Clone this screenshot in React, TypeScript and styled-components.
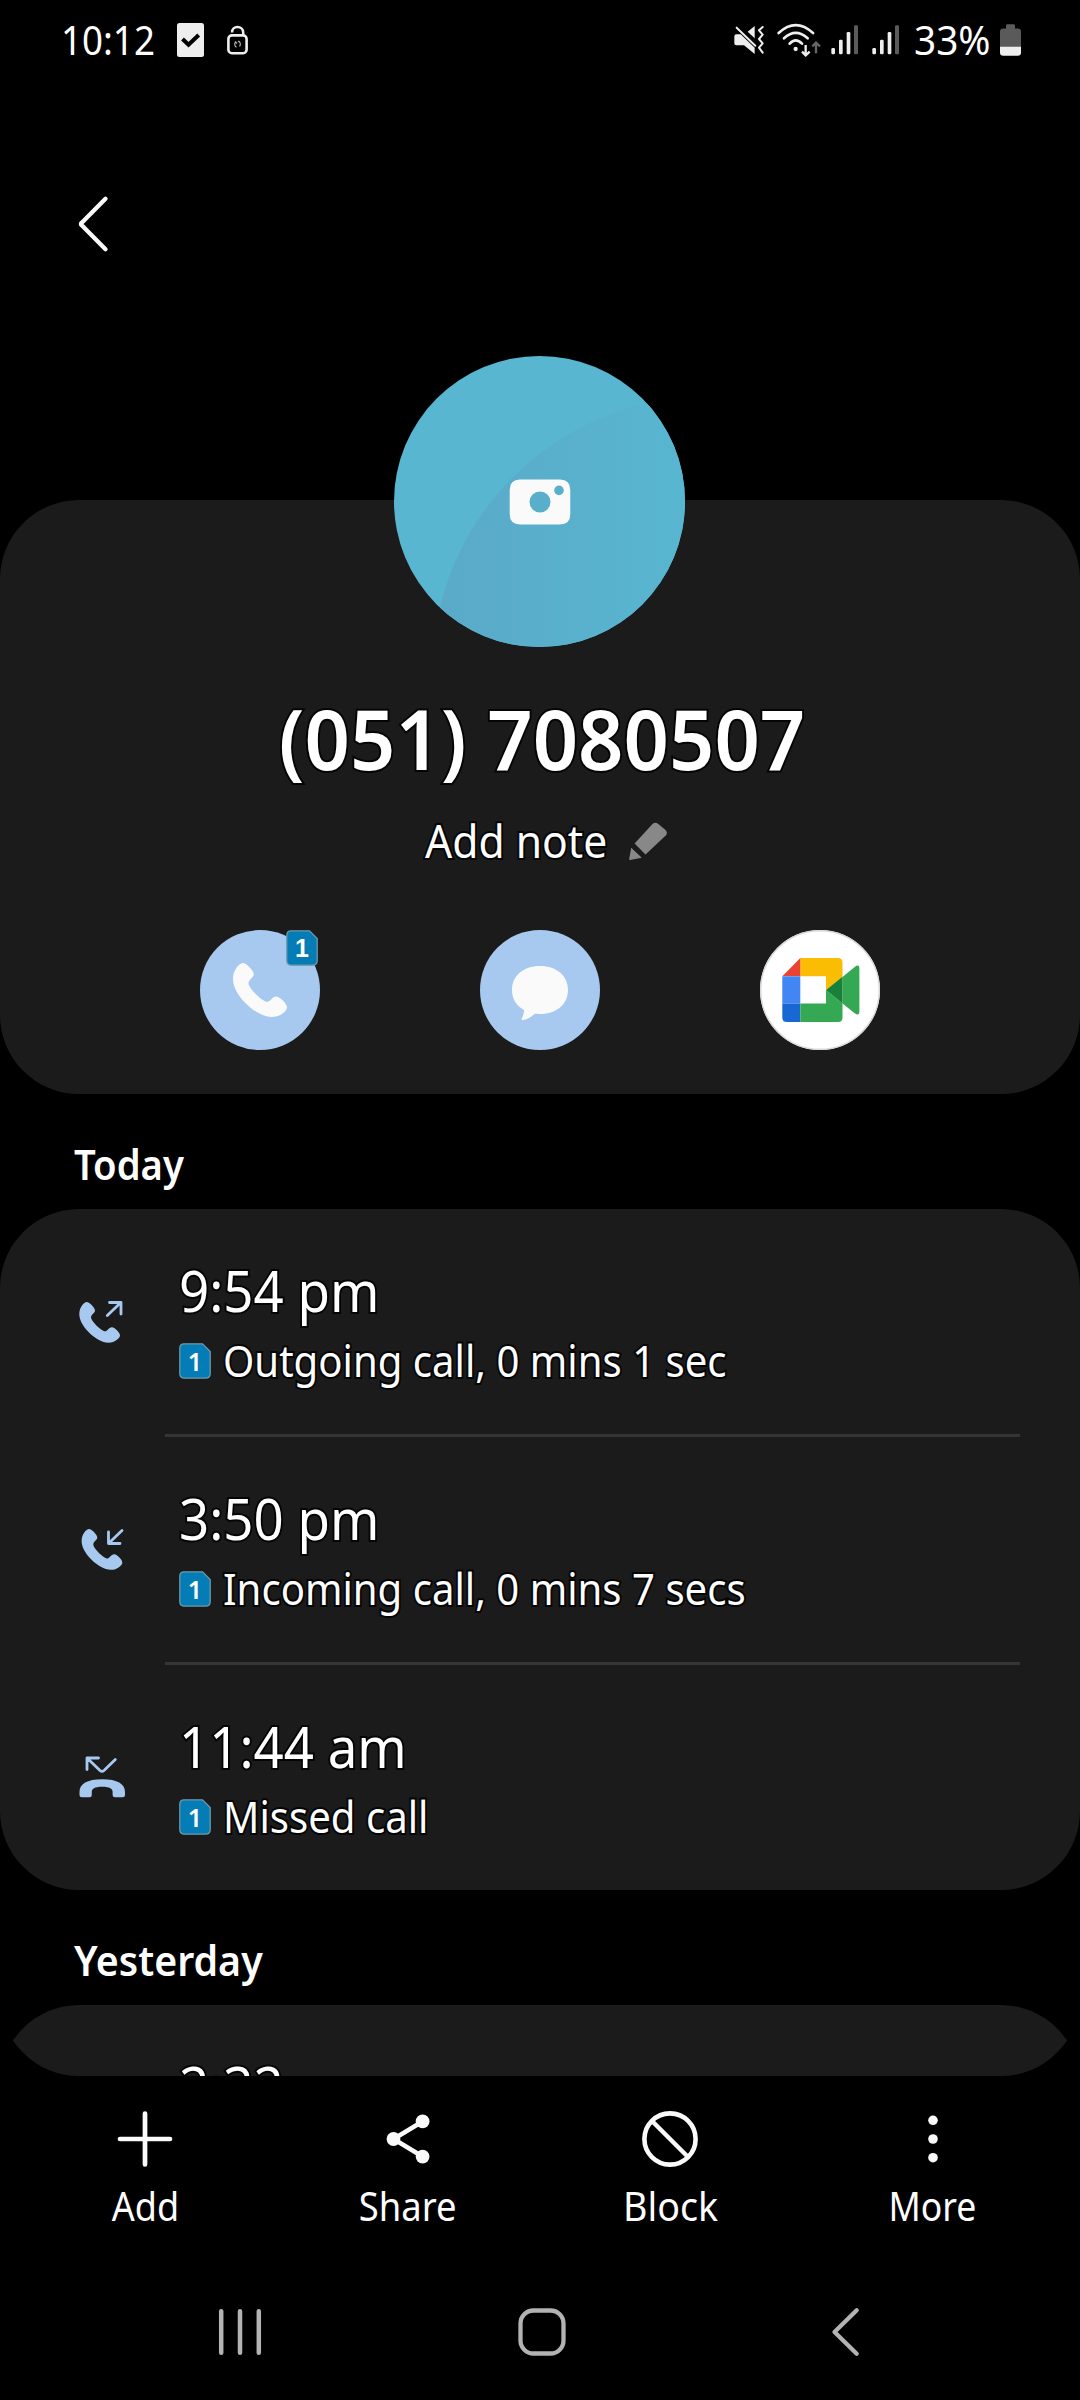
import React from "react";
import styled, { createGlobalStyle } from "styled-components";

const GlobalStyle = createGlobalStyle`
  * { box-sizing: border-box; }
  html, body { margin: 0; padding: 0; background: #000; }
  body { font-family: "Noto Sans", "Open Sans", sans-serif; color: #fff; }
  svg { display: block; flex: none; }
`;

const Screen = styled.div`
  width: 1080px;
  height: 2400px;
  overflow: hidden;
  display: flex;
  flex-direction: column;
  background: #000;
`;

/* Narrow humanist text: Noto Sans condensed by a horizontal factor. */
const Label = styled.span<{
  $size: number;
  $line: number;
  $narrow: number;
  $weight?: number;
  $origin?: string;
  $outlined?: boolean;
}>`
  display: block;
  white-space: nowrap;
  font-size: ${(p) => p.$size}px;
  line-height: ${(p) => p.$line}px;
  font-weight: ${(p) => p.$weight ?? 400};
  transform: scaleX(${(p) => p.$narrow});
  transform-origin: ${(p) => p.$origin ?? "left"} center;
  ${(p) => (p.$outlined ? "-webkit-text-stroke: 4px #050505; paint-order: stroke fill;" : "")}
`;

const StatusBar = styled.header`
  flex: none;
  height: 100px;
  padding: 15px 59px 0 61px;
  display: flex;
  justify-content: space-between;
  align-items: flex-start;
`;

const StatusGroup = styled.div`
  display: flex;
  align-items: center;
  height: 50px;
`;

const Clock = styled.div`
  width: 116px;
`;

const NoticeIcons = styled.div`
  display: flex;
  align-items: center;
  gap: 23px;
`;

const SoundAndWifi = styled.div`
  display: flex;
  align-items: center;
  gap: 13px;
  margin-right: 10px;
`;

const SignalIcons = styled.div`
  display: flex;
  align-items: center;
  gap: 14px;
`;

const Percent = styled.div`
  width: 86px;
  margin-left: 15px;
`;

const AppBar = styled.div`
  flex: none;
  height: 200px;
  padding: 94px 0 0 76px;
`;

const ScrollArea = styled.main`
  flex: none;
  height: 1776px;
  overflow: hidden;
  border-radius: 0 0 79px 79px;
`;

const Card = styled.section`
  background: #1b1b1b;
  border-radius: 79px;
`;

const ProfileCard = styled(Card)`
  margin-top: 200px;
  height: 594px;
  display: flex;
  flex-direction: column;
  align-items: center;
`;

const Avatar = styled.div`
  flex: none;
  width: 291px;
  height: 291px;
  margin-top: -144px;
  margin-right: 1px;
  border-radius: 50%;
  overflow: hidden;
`;

const PhoneNumber = styled.h1`
  margin: 41px 0 0 5px;
`;

const NoteRow = styled.div`
  width: 100%;
  margin-top: 23px;
  padding-left: 425px;
  display: flex;
  align-items: center;
`;

const NoteText = styled.div`
  width: 204px;
`;

const ActionRow = styled.div`
  margin-top: 59px;
  display: flex;
  gap: 160px;
`;

const RoundButton = styled.button<{ $tone: string }>`
  position: relative;
  width: 120px;
  height: 120px;
  padding: 0;
  border: none;
  border-radius: 50%;
  display: flex;
  align-items: center;
  justify-content: center;
  background: ${(p) => p.$tone};
`;

const ButtonBadge = styled.div`
  position: absolute;
  left: 86px;
  top: 0;
`;

const SectionTitle = styled.h2`
  margin: 0;
  height: 115px;
  padding: 40px 0 0 74px;
`;

const CallRow = styled.div`
  height: 225px;
  display: flex;
`;

const CallIcon = styled.div`
  width: 179px;
  padding: 91px 0 0 78px;
`;

const CallBody = styled.div`
  padding-top: 46px;
`;

const CallDetail = styled.div`
  display: flex;
  align-items: center;
  gap: 12px;
  height: 50px;
  margin-top: 11px;
`;

const Divider = styled.div`
  height: 3px;
  margin: 0 60px 0 165px;
  background: #353535;
`;

const SimCard = styled.span`
  flex: none;
  display: grid;
  width: 32px;
  height: 36px;
`;

const SimShape = styled.svg`
  grid-area: 1 / 1;
`;

const SimNumber = styled.span`
  grid-area: 1 / 1;
  z-index: 1;
  font-size: 25px;
  line-height: 36px;
  font-weight: 600;
  text-align: center;
  color: #fff;
`;

const Toolbar = styled.nav`
  flex: none;
  width: 1050px;
  height: 174px;
  margin-left: 14px;
  padding-top: 35px;
  display: grid;
  grid-template-columns: repeat(4, 1fr);
`;

const Tool = styled.div`
  display: flex;
  flex-direction: column;
  align-items: center;
  gap: 14px;
`;

const SystemNav = styled.footer`
  flex: none;
  height: 150px;
  padding: 56px 84px 0 89px;
  display: grid;
  grid-template-columns: repeat(3, 1fr);
  justify-items: center;
`;

const BLUE = "#a7c9ef";
const HANDSET =
  "M8.7 2C6 2.3 1.3 7 1.3 14c0 6 3.700 12.500 9.700 18.500 6 6 13 10.200 19.500 10.200 6.500 0 11.500-4.500 11.500-7.400 0-2.500-5-7.700-8-8.100-3-.3-4.500 4.100-7 4.100C23.500 31.300 13 21 13 17.300 13 14.500 17 13 17 10.500 17 8 11.500 2 8.700 2Z";

function Sim() {
  return (
    <SimCard>
      <SimShape width="32" height="36" viewBox="0 0 32 36">
        <path d="M5 .8H23.500L31.200 8.500V30.500Q31.200 35.200 26.500 35.200H5.500Q.8 35.200 .8 30.500V5.300Q.8.8 5 .8Z" fill="#047cb5" stroke="#6f97a8" strokeWidth="1.300" />
      </SimShape>
      <SimNumber>1</SimNumber>
    </SimCard>
  );
}

function SignalBars() {
  return (
    <svg width="27" height="30" viewBox="393 74 81 90">
      <rect x="394" y="143" width="11" height="19" rx="4" fill="#eee" />
      <rect x="417" y="118" width="11" height="44" rx="4" fill="#eee" />
      <rect x="440" y="95" width="11" height="67" rx="4" fill="#eee" />
      <rect x="462" y="75" width="12" height="87" rx="4" fill="#5b5b5b" />
    </svg>
  );
}

function OutgoingIcon() {
  return (
    <svg width="48" height="44" viewBox="0 0 48 44">
      <path d={HANDSET} fill={BLUE} />
      <path d="M29.300 15.500 42.300 3M31.500 2.500H43V14" fill="none" stroke={BLUE} strokeWidth="2.800" strokeLinecap="round" strokeLinejoin="round" />
    </svg>
  );
}

function IncomingIcon() {
  return (
    <svg width="48" height="44" viewBox="0 0 48 44">
      <path d={HANDSET} fill={BLUE} transform="translate(2.300 -.9)" />
      <path d="M44 2.500 31 15M30.500 4V15.500H42" fill="none" stroke={BLUE} strokeWidth="2.800" strokeLinecap="round" strokeLinejoin="round" />
    </svg>
  );
}

function MissedIcon() {
  return (
    <svg width="48" height="44" viewBox="0 0 48 44">
      <path d="M1.500 36C1.500 28 9 23.300 24.200 23.300S47 28 47 36v3q0 2.300-2.300 2.300H37q-2.400 0-2.400-2.300v-3c0-3-2.600-5.200-10.400-5.200S13.800 33 13.800 36v3q0 2.300-2.300 2.300H3.800Q1.500 41.300 1.500 39Z" fill={BLUE} />
      <path d="M20.500 2H9V13.500M9.500 2.500 22 14.500Q24 16.300 26 14.500L37.300 3.500" fill="none" stroke={BLUE} strokeWidth="2.800" strokeLinecap="round" strokeLinejoin="round" />
    </svg>
  );
}

function Call({ time, detail, icon }: { time: string; detail?: string; icon?: React.ReactNode }) {
  return (
    <CallRow>
      <CallIcon>{icon}</CallIcon>
      <CallBody>
        <Label $size={56} $line={70} $narrow={0.943} $outlined>{time}</Label>
        {detail && (
          <CallDetail>
            <Sim />
            <Label $size={43} $line={50} $narrow={0.933} $outlined>{detail}</Label>
          </CallDetail>
        )}
      </CallBody>
    </CallRow>
  );
}

export default function App() {
  return (
    <Screen>
      <GlobalStyle />
      <StatusBar>
        <StatusGroup>
          <Clock>
            <Label $size={39.5} $line={50} $narrow={0.93}>10:12</Label>
          </Clock>
          <NoticeIcons>
            <svg width="27" height="34" viewBox="0 0 27 34">
              <rect width="27" height="34" rx="2.500" fill="#eee" />
              <path d="M5.500 16 11.500 21.700 21.700 12" fill="none" stroke="#000" strokeWidth="4" />
            </svg>
            <svg width="21" height="30" viewBox="0 0 21 30">
              <rect x="1.400" y="10.400" width="18.200" height="17.800" rx="3.500" fill="none" stroke="#eee" strokeWidth="2.600" />
              <path d="M5 7.500C5 4 7.500 2 10.500 2S16.200 4 16.200 7.500V10" fill="none" stroke="#eee" strokeWidth="2.500" />
              <path d="M8.500 17A3.500 3.500 0 0 0 9.500 22.300M12.500 21.500A3.500 3.500 0 0 0 11.800 16.300M8 16.500 10 18.500M11 16 13 17.500" fill="none" stroke="#bbb" strokeWidth="1.100" />
            </svg>
          </NoticeIcons>
        </StatusGroup>
        <StatusGroup>
          <SoundAndWifi>
            <svg width="30" height="30" viewBox="101 75 90 90">
              <path d="M108 103H121L163 143V162L131 136H108Q102 136 102 130V109Q102 103 108 103Z" fill="#eee" />
              <path d="M142 95 163 78V115Z" fill="#eee" />
              <path d="M109 83 165 137" stroke="#eee" strokeWidth="6" strokeLinecap="round" />
              <path d="M187 81 176 91 187 104 176 117 187 130 176 143 187 158" fill="none" stroke="#eee" strokeWidth="6" strokeLinejoin="round" strokeLinecap="round" />
            </svg>
            <svg width="44" height="34" viewBox="232 67 132 102">
              <g fill="none" stroke="#eee" strokeWidth="8" strokeLinecap="round">
                <path d="M237 97Q288 50 340 97" />
                <path d="M253 113Q288 80 324 113" />
                <path d="M270 129Q288 109 307 129" />
              </g>
              <circle cx="288" cy="145" r="6.500" fill="#eee" />
              <path d="M318 133V163M307 153 318 164 330 153" fill="none" stroke="#eee" strokeWidth="7" />
              <path d="M349 158V127M338 137 349 126 361 137" fill="none" stroke="#666" strokeWidth="7" />
            </svg>
          </SoundAndWifi>
          <SignalIcons>
            <SignalBars />
            <SignalBars />
          </SignalIcons>
          <Percent>
            <Label $size={39.5} $line={50} $narrow={0.98}>33%</Label>
          </Percent>
          <svg width="21" height="32" viewBox="0 0 63 95">
            <path d="M18 13V4Q18 0 22 0H41Q45 0 45 4V13H53Q63 13 63 23V69H0V23Q0 13 10 13Z" fill="#5a5a5a" />
            <path d="M0 68H63V85Q63 95 53 95H10Q0 95 0 85Z" fill="#eee" />
          </svg>
        </StatusGroup>
      </StatusBar>

      <AppBar>
        <svg width="34" height="60" viewBox="0 0 34 60">
          <path d="M29.500 4.800 5.500 29Q4.300 30 5.500 31L29.500 55.200" fill="none" stroke="#fafafa" strokeWidth="4.300" strokeLinecap="round" strokeLinejoin="round" />
        </svg>
      </AppBar>

      <ScrollArea>
        <ProfileCard>
          <Avatar>
            <svg width="291" height="291" viewBox="0 0 291 291">
              <defs>
                <linearGradient id="shade" x1="45" x2="291" y1="0" y2="0" gradientUnits="userSpaceOnUse">
                  <stop offset="0" stopColor="#5aaac8" />
                  <stop offset="1" stopColor="#58b6d0" />
                </linearGradient>
              </defs>
              <rect width="291" height="291" fill="#59b6d0" />
              <circle cx="312.500" cy="315" r="274" fill="url(#shade)" />
              <path fillRule="evenodd" fill="#fafafa" d="M126 123.500H166Q176.300 123.500 176.300 134V158Q176.300 168.400 166 168.400H126Q115.700 168.400 115.700 158V134Q115.700 123.500 126 123.500ZM135.500 146a10.500 10.500 0 1 0 21 0a10.500 10.500 0 1 0-21 0ZM160.200 134.400a4.800 4.800 0 1 0 9.600 0a4.800 4.800 0 1 0-9.600 0Z" />
            </svg>
          </Avatar>
          <PhoneNumber>
            <Label $size={83} $line={100} $narrow={0.957} $weight={600} $origin="center" $outlined>(051) 7080507</Label>
          </PhoneNumber>
          <NoteRow>
            <NoteText>
              <Label $size={45} $line={60} $narrow={0.947} $outlined>Add note</Label>
            </NoteText>
            <svg width="38" height="38" viewBox="0 0 38 38">
              <path d="M5.600 21.500 23.500 2Q26-.5 29 1.700L36.500 8Q39 10.500 37 13.300L16.500 32.500Z" fill="#888" />
              <path d="M2.200 25.800 12.800 35.800 1 38Q0 38 .2 37Z" fill="#888" />
            </svg>
          </NoteRow>
          <ActionRow>
            <RoundButton $tone={BLUE}>
              <svg width="54" height="54" viewBox="1.300 2 40.700 40.700">
                <path d={HANDSET} fill="#fafafa" />
              </svg>
              <ButtonBadge><Sim /></ButtonBadge>
            </RoundButton>
            <RoundButton $tone={BLUE}>
              <svg width="120" height="120" viewBox="0 0 120 120">
                <path d="M60 36C77 36 88 46 88 60S77 84 60 84C57.500 84 56 83.700 54.500 83.900C50 88 46 90 42.500 90.200Q41 90 42.200 87.500C43.500 84.500 44.200 82 44 80C36.500 76 32 69 32 60C32 46 43 36 60 36Z" fill="#fafafa" />
              </svg>
            </RoundButton>
            <RoundButton $tone="#fff">
              <svg width="120" height="120" viewBox="760 930 120 120">
                <circle cx="820" cy="990" r="59.300" fill="#fff" stroke="#d8d8d8" strokeWidth="1.400" />
                <path d="M800.300 958H838Q842.500 958 842.500 962.500V977L826 990V976.300H800.300Z" fill="#fbbc04" />
                <path d="M800.300 958V976.300H782.300Z" fill="#ea4335" />
                <path d="M782.300 976.300H800.300V1003.500H782.300Z" fill="#4285f4" />
                <path d="M782.300 1003.500H800.300V1022H787Q782.300 1022 782.300 1017.500Z" fill="#1967d2" />
                <path d="M800.300 1003.500H826V990L842.500 1003.500V1017.500Q842.500 1022 838 1022H800.300Z" fill="#34a853" />
                <path d="M842.500 977 855 966.700Q859.400 964 859.400 968V1012Q859.400 1016 855 1013.400L842.500 1003.500Z" fill="#34a853" />
                <path d="M826 990 842.500 976.700V1003.500Z" fill="#188038" />
              </svg>
            </RoundButton>
          </ActionRow>
        </ProfileCard>

        <SectionTitle>
          <Label $size={42} $line={60} $narrow={0.91} $weight={600}>Today</Label>
        </SectionTitle>
        <Card>
          <Call time="9:54 pm" detail="Outgoing call, 0 mins 1 sec" icon={<OutgoingIcon />} />
          <Divider />
          <Call time="3:50 pm" detail="Incoming call, 0 mins 7 secs" icon={<IncomingIcon />} />
          <Divider />
          <Call time="11:44 am" detail="Missed call" icon={<MissedIcon />} />
        </Card>

        <SectionTitle>
          <Label $size={42} $line={60} $narrow={0.937} $weight={600}>Yesterday</Label>
        </SectionTitle>
        <Card>
          <Call time="2:32" />
        </Card>
      </ScrollArea>

      <Toolbar>
        <Tool>
          <svg width="56" height="56" viewBox="0 0 56 56">
            <path d="M28 2.500V53.500M3 28H53" stroke="#fafafa" strokeWidth="4.700" strokeLinecap="round" />
          </svg>
          <Label $size={40} $line={50} $narrow={0.9} $origin="center">Add</Label>
        </Tool>
        <Tool>
          <svg width="56" height="56" viewBox="0 0 56 56">
            <path d="M42.500 10.500 13.500 28 42.500 45.500" fill="none" stroke="#fafafa" strokeWidth="4.500" />
            <circle cx="13.500" cy="28" r="6.900" fill="#fafafa" />
            <circle cx="42.600" cy="10.400" r="6.900" fill="#fafafa" />
            <circle cx="42.600" cy="45.600" r="6.900" fill="#fafafa" />
          </svg>
          <Label $size={40} $line={50} $narrow={0.91} $origin="center">Share</Label>
        </Tool>
        <Tool>
          <svg width="56" height="56" viewBox="0 0 56 56">
            <circle cx="28" cy="28" r="25.600" fill="none" stroke="#fafafa" strokeWidth="4.600" />
            <path d="M10 10 46 46" stroke="#fafafa" strokeWidth="4.500" />
          </svg>
          <Label $size={40} $line={50} $narrow={0.94} $origin="center">Block</Label>
        </Tool>
        <Tool>
          <svg width="56" height="56" viewBox="0 0 56 56">
            <circle cx="28" cy="9.300" r="4.800" fill="#fafafa" />
            <circle cx="28" cy="28" r="4.800" fill="#fafafa" />
            <circle cx="28" cy="46.700" r="4.800" fill="#fafafa" />
          </svg>
          <Label $size={40} $line={50} $narrow={0.89} $origin="center">More</Label>
        </Tool>
      </Toolbar>

      <SystemNav>
        <svg width="48" height="52" viewBox="0 0 48 52">
          <path d="M5.200 5.200V46.800M24 5.200V46.800M42.800 5.200V46.800" stroke="#b3b3b3" strokeWidth="4.500" strokeLinecap="round" />
        </svg>
        <svg width="48" height="52" viewBox="0 0 48 52">
          <rect x="2.500" y="4.500" width="43" height="43" rx="13" fill="none" stroke="#b3b3b3" strokeWidth="4.300" />
        </svg>
        <svg width="48" height="52" viewBox="0 0 48 52">
          <path d="M35.700 4.200 13.500 26 35.700 47.800" fill="none" stroke="#b3b3b3" strokeWidth="4.300" strokeLinecap="round" strokeLinejoin="round" />
        </svg>
      </SystemNav>
    </Screen>
  );
}
